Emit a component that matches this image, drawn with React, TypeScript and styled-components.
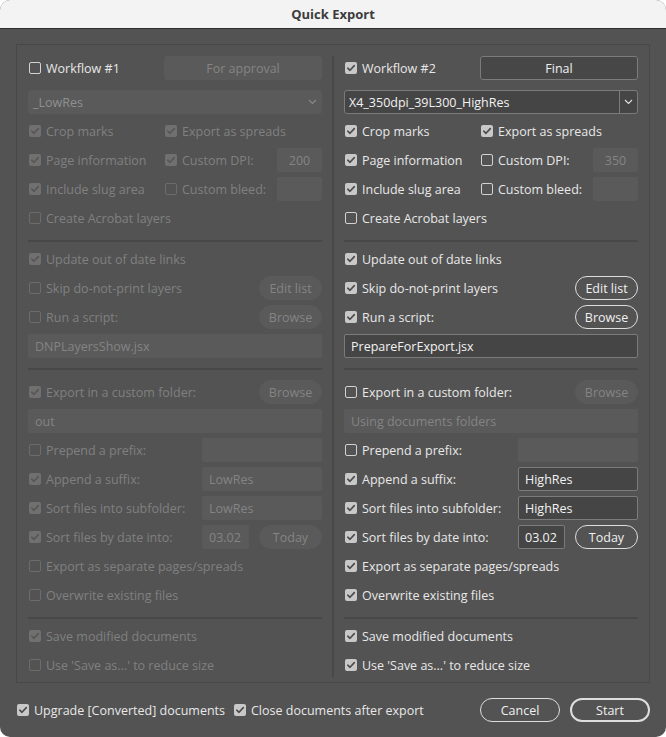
import React from 'react';
import styled, { createGlobalStyle, css } from 'styled-components';

const Global = createGlobalStyle`
  html, body { margin: 0; padding: 0; background: #ffffff; }
  body { font-family: "Open Sans", "Noto Sans", sans-serif; }
  * { box-sizing: border-box; }
`;

const Window = styled.div`
  width: 666px;
  height: 737px;
  border-radius: 10px;
  overflow: hidden;
  display: flex;
  flex-direction: column;
  background: #535353;
  font-family: "Open Sans", "Noto Sans", sans-serif;
  font-size: 12.5px;
  color: #e8e8e8;
`;

const TitleBar = styled.div`
  height: 29px;
  flex: none;
  background: #f3f3f3;
  border-bottom: 1px solid #2e2e2e;
  display: flex;
  align-items: center;
  justify-content: center;
  font-weight: 700;
  font-size: 13px;
  color: #3c3c3c;
`;

const Body = styled.div`
  flex: 1;
  display: flex;
  flex-direction: column;
  padding: 15px 16px 0;
`;

const Panel = styled.div`
  border: 1px solid #484848;
  padding: 11px 11px 5px;
  display: grid;
  grid-template-columns: 294px 22px 294px;
`;

const Divider = styled.div`
  width: 2px;
  justify-self: center;
  background: #484848;
`;

const Column = styled.div`
  display: flex;
  flex-direction: column;
  gap: 5px;
`;

const Row = styled.div<{ $top?: number }>`
  height: 24px;
  display: flex;
  align-items: center;
  justify-content: space-between;
  margin-top: ${(p) => p.$top ?? 0}px;
`;

const Split = styled.div`
  height: 24px;
  display: grid;
  grid-template-columns: 136px 1fr;
  align-items: center;
`;

const Cell = styled.div`
  display: flex;
  align-items: center;
  justify-content: space-between;
`;

const Group = styled.div`
  display: flex;
  align-items: center;
  gap: 10px;
`;

const Rule = styled.div<{ $after?: number }>`
  height: 2px;
  flex: none;
  background: #484848;
  margin: 5px 0 ${(p) => p.$after ?? 0}px;
`;

const Box = styled.span<{ $checked: boolean; $disabled: boolean }>`
  width: 12px;
  height: 12px;
  flex: none;
  border-radius: 2px;
  display: inline-flex;
  align-items: center;
  justify-content: center;
  ${(p) =>
    p.$checked
      ? css`
          background: ${p.$disabled ? '#707070' : '#c8c8c8'};
        `
      : css`
          border: 1px solid ${p.$disabled ? '#6c6c6c' : '#d2d2d2'};
        `}
`;

const CheckLabel = styled.span<{ $disabled: boolean }>`
  display: inline-flex;
  align-items: center;
  gap: 5px;
  margin-left: 1px;
  white-space: nowrap;
  color: ${(p) => (p.$disabled ? '#808080' : '#e8e8e8')};
`;

const Field = styled.div<{ $w?: number; $disabled?: boolean; $center?: boolean }>`
  height: 24px;
  width: ${(p) => (p.$w ? `${p.$w}px` : '100%')};
  flex: none;
  padding: 0 6px;
  display: flex;
  align-items: center;
  justify-content: ${(p) => (p.$center ? 'center' : 'flex-start')};
  border-radius: 2px;
  white-space: nowrap;
  ${(p) =>
    p.$disabled
      ? css`
          background: #5a5a5a;
          border: 1px solid #5a5a5a;
          color: #848484;
        `
      : css`
          background: #454545;
          border: 1px solid #7b7b7b;
          color: #f2f2f2;
        `}
`;

const Pill = styled.button<{ $disabled?: boolean; $primary?: boolean; $w?: number }>`
  height: 24px;
  width: ${(p) => p.$w ?? 63}px;
  flex: none;
  border-radius: 12px;
  padding: 0;
  font-family: inherit;
  font-size: 12.5px;
  ${(p) =>
    p.$disabled
      ? css`
          background: #5a5a5a;
          border: 1px solid #5a5a5a;
          color: #848484;
        `
      : css`
          background: transparent;
          border: ${p.$primary ? 2 : 1}px solid #dedede;
          color: #f0f0f0;
        `}
`;

const RectButton = styled.button<{ $disabled?: boolean }>`
  height: 24px;
  width: 158px;
  border-radius: 3px;
  padding: 0;
  font-family: inherit;
  font-size: 12.5px;
  ${(p) =>
    p.$disabled
      ? css`
          background: #5a5a5a;
          border: 1px solid #5a5a5a;
          color: #848484;
        `
      : css`
          background: #474747;
          border: 1px solid #7b7b7b;
          color: #f0f0f0;
        `}
`;

const Select = styled.div<{ $disabled?: boolean }>`
  height: 24px;
  margin-top: 5px;
  display: flex;
  border-radius: 3px;
  ${(p) =>
    p.$disabled
      ? css`
          background: #5a5a5a;
          border: 1px solid #5a5a5a;
          color: #909090;
        `
      : css`
          background: #454545;
          border: 1px solid #7b7b7b;
          color: #f2f2f2;
        `}
`;

const SelectText = styled.div`
  flex: 1;
  padding-left: 4px;
  display: flex;
  align-items: center;
`;

const SelectArrow = styled.div<{ $disabled?: boolean }>`
  width: 18px;
  display: flex;
  align-items: center;
  justify-content: center;
  border-left: 1px solid ${(p) => (p.$disabled ? 'transparent' : '#7b7b7b')};
  color: ${(p) => (p.$disabled ? '#8a8a8a' : '#e0e0e0')};
`;

const Footer = styled.div`
  flex: 1;
  display: flex;
  align-items: center;
  gap: 8px;
`;

const Spacer = styled.div`
  flex: 1;
`;

const FooterButtons = styled.div`
  display: flex;
  gap: 10px;
`;

type CheckProps = { checked: boolean; disabled?: boolean; children: React.ReactNode };

const Check = ({ checked, disabled = false, children }: CheckProps) => (
  <CheckLabel $disabled={disabled}>
    <Box $checked={checked} $disabled={disabled}>
      {checked && (
        <svg width="10" height="10" viewBox="0 0 10 10">
          <path
            d="M1.8 5.2 L4 7.3 L8.3 2.6"
            fill="none"
            stroke={disabled ? '#565656' : '#4a4a4a'}
            strokeWidth="1.6"
            strokeLinecap="round"
            strokeLinejoin="round"
          />
        </svg>
      )}
    </Box>
    {children}
  </CheckLabel>
);

const Chevron = () => (
  <svg width="9" height="6" viewBox="0 0 9 6">
    <path d="M1 1 L4.5 4.5 L8 1" fill="none" stroke="currentColor" strokeWidth="1.1" />
  </svg>
);

type Cfg = {
  active: boolean;
  title: string;
  button: string;
  preset: string;
  crop: boolean;
  spreads: boolean;
  pageInfo: boolean;
  dpi: boolean;
  dpiValue: string;
  slug: boolean;
  bleed: boolean;
  acrobat: boolean;
  update: boolean;
  skip: boolean;
  script: boolean;
  scriptFile: string;
  folder: boolean;
  folderText: string;
  prefix: boolean;
  suffix: boolean;
  suffixValue: string;
  sub: boolean;
  subValue: string;
  date: boolean;
  dateValue: string;
  separate: boolean;
  overwrite: boolean;
  save: boolean;
  saveAs: boolean;
};

const Workflow = ({ c }: { c: Cfg }) => {
  const off = !c.active;
  const dep = (v: boolean) => off || !v;
  return (
    <Column>
      <Row>
        <Check checked={c.active}>{c.title}</Check>
        <RectButton $disabled={off}>{c.button}</RectButton>
      </Row>
      <Select $disabled={off}>
        <SelectText>{c.preset}</SelectText>
        <SelectArrow $disabled={off}>
          <Chevron />
        </SelectArrow>
      </Select>
      <Split>
        <Check checked={c.crop} disabled={off}>Crop marks</Check>
        <Check checked={c.spreads} disabled={off}>Export as spreads</Check>
      </Split>
      <Split>
        <Check checked={c.pageInfo} disabled={off}>Page information</Check>
        <Cell>
          <Check checked={c.dpi} disabled={off}>Custom DPI:</Check>
          <Field $w={45} $center $disabled={dep(c.dpi)}>{c.dpiValue}</Field>
        </Cell>
      </Split>
      <Split>
        <Check checked={c.slug} disabled={off}>Include slug area</Check>
        <Cell>
          <Check checked={c.bleed} disabled={off}>Custom bleed:</Check>
          <Field $w={45} $disabled={dep(c.bleed)} />
        </Cell>
      </Split>
      <Row>
        <Check checked={c.acrobat} disabled={off}>Create Acrobat layers</Check>
      </Row>
      <Rule />
      <Row>
        <Check checked={c.update} disabled={off}>Update out of date links</Check>
      </Row>
      <Row>
        <Check checked={c.skip} disabled={off}>Skip do-not-print layers</Check>
        <Pill $disabled={dep(c.skip)}>Edit list</Pill>
      </Row>
      <Row>
        <Check checked={c.script} disabled={off}>Run a script:</Check>
        <Pill $disabled={dep(c.script)}>Browse</Pill>
      </Row>
      <Field $disabled={dep(c.script)}>{c.scriptFile}</Field>
      <Rule $after={5} />
      <Row>
        <Check checked={c.folder} disabled={off}>Export in a custom folder:</Check>
        <Pill $disabled={dep(c.folder)}>Browse</Pill>
      </Row>
      <Field $disabled={dep(c.folder)}>{c.folderText}</Field>
      <Row>
        <Check checked={c.prefix} disabled={off}>Prepend a prefix:</Check>
        <Field $w={120} $disabled={dep(c.prefix)} />
      </Row>
      <Row>
        <Check checked={c.suffix} disabled={off}>Append a suffix:</Check>
        <Field $w={120} $disabled={dep(c.suffix)}>{c.suffixValue}</Field>
      </Row>
      <Row>
        <Check checked={c.sub} disabled={off}>Sort files into subfolder:</Check>
        <Field $w={120} $disabled={dep(c.sub)}>{c.subValue}</Field>
      </Row>
      <Row>
        <Check checked={c.date} disabled={off}>Sort files by date into:</Check>
        <Group>
          <Field $w={47} $disabled={dep(c.date)}>{c.dateValue}</Field>
          <Pill $disabled={dep(c.date)}>Today</Pill>
        </Group>
      </Row>
      <Row>
        <Check checked={c.separate} disabled={off}>Export as separate pages/spreads</Check>
      </Row>
      <Row>
        <Check checked={c.overwrite} disabled={off}>Overwrite existing files</Check>
      </Row>
      <Rule />
      <Row>
        <Check checked={c.save} disabled={off}>Save modified documents</Check>
      </Row>
      <Row>
        <Check checked={c.saveAs} disabled={off}>Use 'Save as...' to reduce size</Check>
      </Row>
    </Column>
  );
};

const left: Cfg = {
  active: false,
  title: 'Workflow #1',
  button: 'For approval',
  preset: '_LowRes',
  crop: true,
  spreads: true,
  pageInfo: true,
  dpi: true,
  dpiValue: '200',
  slug: true,
  bleed: false,
  acrobat: false,
  update: true,
  skip: false,
  script: false,
  scriptFile: 'DNPLayersShow.jsx',
  folder: true,
  folderText: 'out',
  prefix: false,
  suffix: true,
  suffixValue: 'LowRes',
  sub: true,
  subValue: 'LowRes',
  date: true,
  dateValue: '03.02',
  separate: false,
  overwrite: false,
  save: true,
  saveAs: false,
};

const right: Cfg = {
  active: true,
  title: 'Workflow #2',
  button: 'Final',
  preset: 'X4_350dpi_39L300_HighRes',
  crop: true,
  spreads: true,
  pageInfo: true,
  dpi: false,
  dpiValue: '350',
  slug: true,
  bleed: false,
  acrobat: false,
  update: true,
  skip: true,
  script: true,
  scriptFile: 'PrepareForExport.jsx',
  folder: false,
  folderText: 'Using documents folders',
  prefix: false,
  suffix: true,
  suffixValue: 'HighRes',
  sub: true,
  subValue: 'HighRes',
  date: true,
  dateValue: '03.02',
  separate: true,
  overwrite: true,
  save: true,
  saveAs: true,
};

export default function App() {
  return (
    <>
      <Global />
      <Window>
        <TitleBar>Quick Export</TitleBar>
        <Body>
          <Panel>
            <Workflow c={left} />
            <Divider />
            <Workflow c={right} />
          </Panel>
          <Footer>
            <Check checked>Upgrade [Converted] documents</Check>
            <Check checked>Close documents after export</Check>
            <Spacer />
            <FooterButtons>
              <Pill $w={80}>Cancel</Pill>
              <Pill $w={80} $primary>Start</Pill>
            </FooterButtons>
          </Footer>
        </Body>
      </Window>
    </>
  );
}
